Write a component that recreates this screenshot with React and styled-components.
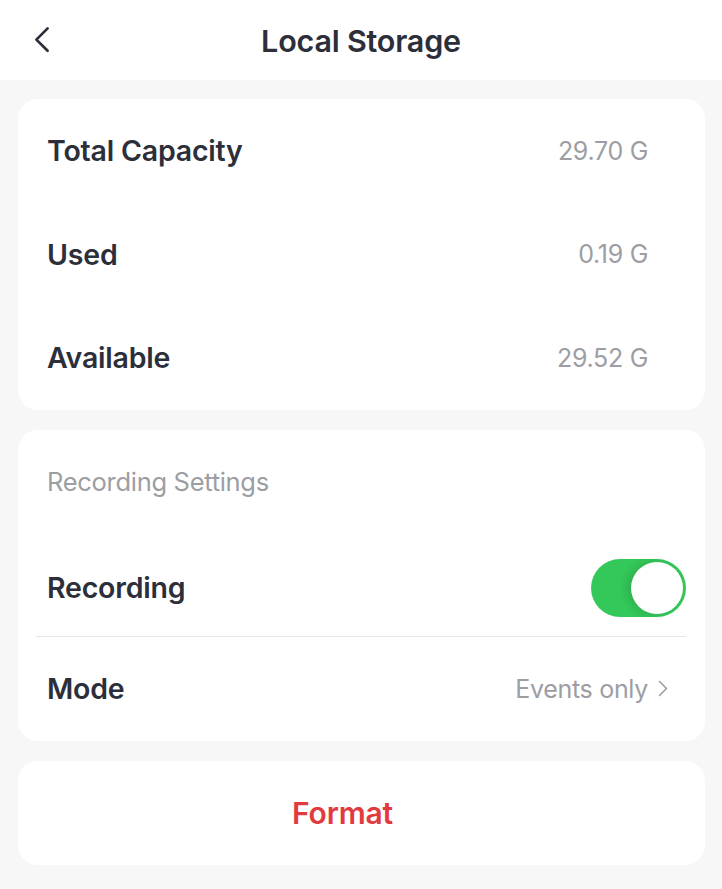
import React, { useState } from 'react';
import styled, { createGlobalStyle } from 'styled-components';

const GlobalStyle = createGlobalStyle`
    html, body {
        margin: 0;
        padding: 0;
        background: #f7f7f7;
        font-family: Inter, "Noto Sans", sans-serif;
        -webkit-font-smoothing: antialiased;
    }
`;

const Page = styled.div`
    width: 722px;
    min-height: 889px;
    background: #f7f7f7;
`;

const Header = styled.header`
    height: 80px;
    background: #fff;
    display: grid;
    grid-template-columns: 80px 1fr 80px;
    align-items: center;
`;

const BackButton = styled.button`
    border: 0;
    background: none;
    padding: 0 0 0 34px;
    display: flex;
    align-items: center;
    color: #2c2f3a;
    cursor: pointer;
`;

const Title = styled.h1`
    margin: 0;
    text-align: center;
    font-size: 30.5px;
    font-weight: 600;
    color: #2c2f3a;
    letter-spacing: -0.2px;
`;

const Content = styled.main`
    display: flex;
    flex-direction: column;
    gap: 20px;
    padding: 19px 17px 0 18px;
`;

const Card = styled.section`
    background: #fff;
    border-radius: 20px;
`;

const Row = styled.div`
    display: flex;
    align-items: center;
    justify-content: space-between;
    height: ${p => p.$height || 104}px;
    padding: 0 ${p => p.$right ?? 57}px 0 29px;
    box-sizing: border-box;
`;

const Label = styled.span`
    font-size: 28.5px;
    font-weight: 600;
    color: #2c2f3a;
    letter-spacing: -0.2px;
`;

const Value = styled.span`
    display: flex;
    align-items: center;
    gap: 10px;
    font-size: 25px;
    color: #9c9ea4;
    letter-spacing: -0.3px;
`;

const SectionTitle = styled.div`
    padding: 36px 29px 0;
    height: 110px;
    box-sizing: border-box;
    font-size: 25.5px;
    color: #9c9ea4;
    letter-spacing: -0.3px;
`;

const Divider = styled.div`
    height: 1px;
    background: #e6e7e9;
    margin: 0 19px 0 18px;
`;

const Switch = styled.button`
    width: 95px;
    height: 58px;
    border: 0;
    border-radius: 29px;
    padding: 3px;
    background: ${p => (p.$on ? '#34c759' : '#e5e5ea')};
    display: flex;
    justify-content: ${p => (p.$on ? 'flex-end' : 'flex-start')};
    cursor: pointer;
    box-sizing: border-box;
`;

const Knob = styled.span`
    width: 52px;
    height: 52px;
    border-radius: 50%;
    background: #fff;
    box-shadow: -4px 0 8px rgba(0, 0, 0, 0.12);
`;

const FormatButton = styled.button`
    width: 100%;
    height: 104px;
    border: 0;
    border-radius: 20px;
    background: #fff;
    color: #e23b3f;
    font-family: inherit;
    font-size: 30px;
    font-weight: 600;
    letter-spacing: -0.2px;
    padding: 0 38px 0 0;
    cursor: pointer;
`;

const Chevron = ({ size = 14, dir = 'right', color = 'currentColor', stroke = 2 }) => (
    <svg width={size} height={size * 1.7} viewBox="0 0 10 17" fill="none">
        <path
            d={dir === 'left' ? 'M8.5 1.5L1.5 8.5L8.5 15.5' : 'M1.5 1.5L8.5 8.5L1.5 15.5'}
            stroke={color}
            strokeWidth={stroke}
            strokeLinecap="round"
            strokeLinejoin="round"
        />
    </svg>
);

const stats = [
    { label: 'Total Capacity', value: '29.70 G' },
    { label: 'Used', value: '0.19 G' },
    { label: 'Available', value: '29.52 G' },
];

const App = () => {
    const [recording, setRecording] = useState(true);

    return (
        <>
            <GlobalStyle />
            <Page>
                <Header>
                    <BackButton aria-label="Back">
                        <Chevron dir="left" size={16} stroke={1.7} />
                    </BackButton>
                    <Title>Local Storage</Title>
                    <div />
                </Header>
                <Content>
                    <Card>
                        {stats.map(s => (
                            <Row key={s.label} $height={103.5}>
                                <Label>{s.label}</Label>
                                <Value>{s.value}</Value>
                            </Row>
                        ))}
                    </Card>
                    <Card>
                        <SectionTitle>Recording Settings</SectionTitle>
                        <Row $height={96} $right={19}>
                            <Label>Recording</Label>
                            <Switch $on={recording} onClick={() => setRecording(!recording)}>
                                <Knob />
                            </Switch>
                        </Row>
                        <Divider />
                        <Row $height={104} $right={37}>
                            <Label>Mode</Label>
                            <Value>
                                Events only
                                <Chevron size={10} stroke={1.6} />
                            </Value>
                        </Row>
                    </Card>
                    <FormatButton>Format</FormatButton>
                </Content>
            </Page>
        </>
    );
};

export default App;
